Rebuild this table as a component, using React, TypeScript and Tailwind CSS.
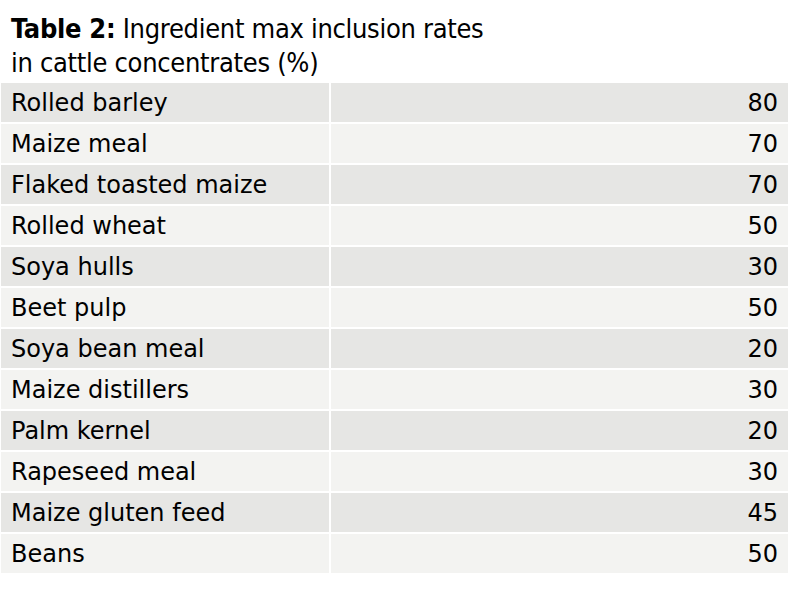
const rows: [string, number][] = [
  ["Rolled barley", 80],
  ["Maize meal", 70],
  ["Flaked toasted maize", 70],
  ["Rolled wheat", 50],
  ["Soya hulls", 30],
  ["Beet pulp", 50],
  ["Soya bean meal", 20],
  ["Maize distillers", 30],
  ["Palm kernel", 20],
  ["Rapeseed meal", 30],
  ["Maize gluten feed", 45],
  ["Beans", 50],
];

export default function App() {
  return (
    <div className="w-[790px] h-[607px] bg-white pl-[1px] pr-[2px] pt-[12px] text-black">
      {/* title */}
      <h1 className="pl-[10px] font-['DejaVu_Sans_Condensed',sans-serif] [font-stretch:condensed] text-[27px] leading-[34px] tracking-[-0.3px]">
        <span className="font-bold">Table 2:</span> Ingredient max inclusion rates
        <br />
        in cattle concentrates (%)
      </h1>

      {/* table */}
      <div className="mt-[3px] flex flex-col gap-[2px] font-['DejaVu_Sans',sans-serif] text-[24px]">
        {rows.map(([name, value], i) => (
          <div
            key={name}
            className={`flex h-[39px] gap-[2px] ${i % 2 === 0 ? "bg-[#e6e6e4]" : "bg-[#f3f3f1]"}`}
          >
            <div className="w-[326px] flex items-center pl-[10px]">{name}</div>
            <div className="flex-1 flex items-center justify-end pr-[10px] border-l-2 border-white">
              {value}
            </div>
          </div>
        ))}
      </div>
    </div>
  );
}
